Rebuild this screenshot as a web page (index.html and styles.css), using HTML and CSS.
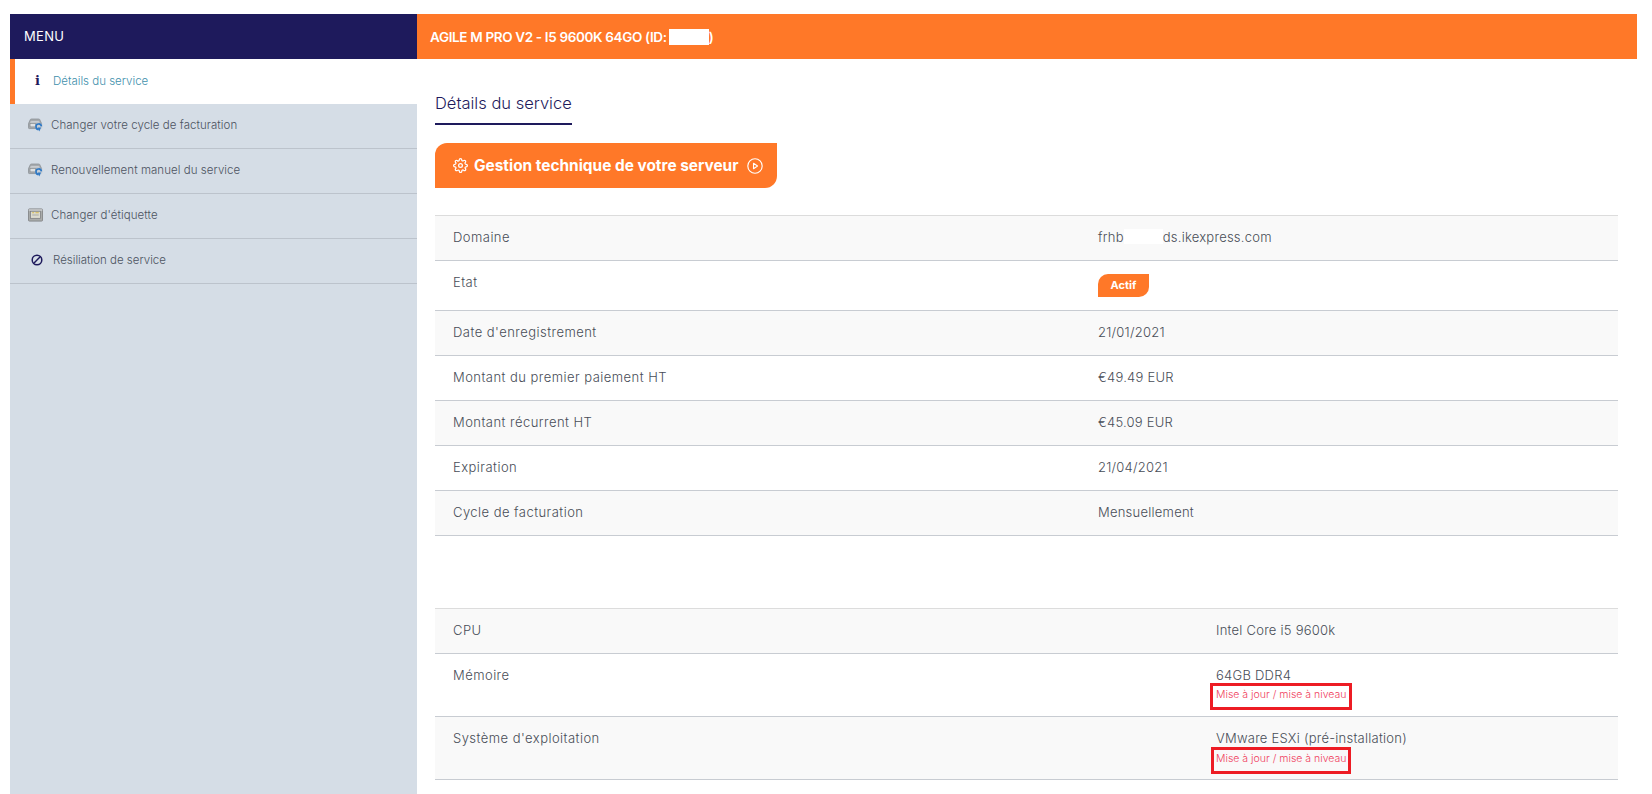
FILE: index.html
```html
<!DOCTYPE html>
<html lang="fr">
<head>
<meta charset="utf-8">
<title>Détails du service</title>
<link rel="stylesheet" href="styles.css">
</head>
<body>
<svg class="defs" width="0" height="0">
  <symbol id="drive" viewBox="0 0 16 14">
    <path d="M0.500 5.500 2.500 1.200Q2.700.6 3.500.6h8q.8 0 1 .6l2 4.300v4.500q0 .8-.8.8H1.300q-.8 0-.8-.8z" fill="#a6aaae" stroke="#8a8f94" stroke-width=".8"/>
    <path d="M2.200 4.500q0-1.700 1.700-1.700h7q1.500 0 1.700 1.700z" fill="#c9ccd0"/>
    <rect x="2.200" y="5.500" width="5.800" height="3.500" fill="#dfe1e3" stroke="#84888c" stroke-width=".6"/>
    <circle cx="11.700" cy="8.800" r="3.900" fill="#d5dde6" opacity=".7"/>
    <path d="M14.300 8.400A2.900 2.900 0 1 0 11.500 11.700" fill="none" stroke="#2f78c4" stroke-width="1.800"/>
    <path d="M10.400 9.700 14 9.700 12 13.800z" fill="#2f78c4"/>
  </symbol>
</svg>
<div class="page">
  <aside class="sidebar">
    <div class="menu-head">MENU</div>
    <a class="item active"><span class="glyph">i</span><span>Détails du service</span></a>
    <a class="item"><svg class="ico"><use href="#drive"/></svg><span>Changer votre cycle de facturation</span></a>
    <a class="item"><svg class="ico"><use href="#drive"/></svg><span>Renouvellement manuel du service</span></a>
    <a class="item"><svg class="ico" viewBox="0 0 16 14"><rect x="0.500" y="0.500" width="15" height="13" rx="1" fill="#a9abaa" stroke="#85888a"/><rect x="0.800" y="0.800" width="14.400" height="2" fill="#c3c6c8"/><rect x="2.800" y="3" width="10.400" height="7.500" fill="#dcdbcf" stroke="#74777a" stroke-width=".7"/><path d="M4.500 4.600h2M8 4.600h3.500" stroke="#d9bc4f" stroke-width="1.100"/><path d="M4.500 7h7" stroke="#9a9c9b" stroke-width=".8"/></svg><span>Changer d'étiquette</span></a>
    <a class="item slim"><svg class="ban" viewBox="0 0 12 12"><circle cx="6" cy="6" r="4.800" fill="none" stroke="#1e1a5c" stroke-width="1.500"/><path d="M2.800 9.200 9.200 2.800" stroke="#1e1a5c" stroke-width="1.500"/></svg><span>Résiliation de service</span></a>
  </aside>
  <main class="content">
    <header class="title-bar">AGILE M PRO V2 - I5 9600K 64GO (ID:<span class="mask"></span>)</header>
    <div class="body">
      <h2 class="tab-title">Détails du service</h2>
      <a class="cta"><svg class="cta-ico" viewBox="0 0 24 24" fill="none" stroke="#fff" stroke-width="2" stroke-linejoin="round"><circle cx="12" cy="12" r="3"/><path d="M19.400 15a1.650 1.650 0 0 0 .33 1.820l.06.06a2 2 0 0 1 0 2.830 2 2 0 0 1-2.830 0l-.06-.06a1.650 1.650 0 0 0-1.820-.33 1.650 1.650 0 0 0-1 1.510V21a2 2 0 0 1-2 2 2 2 0 0 1-2-2v-.09A1.650 1.650 0 0 0 9 19.400a1.650 1.650 0 0 0-1.820.33l-.06.06a2 2 0 0 1-2.830 0 2 2 0 0 1 0-2.830l.06-.06a1.650 1.650 0 0 0 .33-1.820 1.650 1.650 0 0 0-1.510-1H3a2 2 0 0 1-2-2 2 2 0 0 1 2-2h.09A1.650 1.650 0 0 0 4.600 9a1.650 1.650 0 0 0-.33-1.820l-.06-.06a2 2 0 0 1 0-2.830 2 2 0 0 1 2.830 0l.06.06a1.650 1.650 0 0 0 1.820.33H9a1.650 1.650 0 0 0 1-1.510V3a2 2 0 0 1 2-2 2 2 0 0 1 2 2v.09a1.650 1.650 0 0 0 1 1.510 1.650 1.650 0 0 0 1.820-.33l.06-.06a2 2 0 0 1 2.830 0 2 2 0 0 1 0 2.830l-.06.06a1.650 1.650 0 0 0-.33 1.820V9a1.650 1.650 0 0 0 1.510 1H21a2 2 0 0 1 2 2 2 2 0 0 1-2 2h-.09a1.650 1.650 0 0 0-1.510 1z"/></svg><span>Gestion technique de votre serveur</span><svg class="play" viewBox="0 0 24 24" fill="none" stroke="#fff" stroke-width="1.700" stroke-linejoin="round"><circle cx="12" cy="12" r="10.800"/><path d="M9.800 8l6 4-6 4z"/></svg></a>
      <section class="info-table first">
        <div class="row"><span class="k">Domaine</span><span class="v">frhb<span class="gap"></span>ds.ikexpress.com</span></div>
        <div class="row tall"><span class="k">Etat</span><span class="v"><span class="badge">Actif</span></span></div>
        <div class="row"><span class="k">Date d'enregistrement</span><span class="v">21/01/2021</span></div>
        <div class="row"><span class="k">Montant du premier paiement HT</span><span class="v">€49.49 EUR</span></div>
        <div class="row"><span class="k">Montant récurrent HT</span><span class="v">€45.09 EUR</span></div>
        <div class="row"><span class="k">Expiration</span><span class="v">21/04/2021</span></div>
        <div class="row"><span class="k">Cycle de facturation</span><span class="v">Mensuellement</span></div>
      </section>
      <section class="info-table second">
        <div class="row"><span class="k">CPU</span><span class="v">Intel Core i5 9600k</span></div>
        <div class="row up"><span class="k">Mémoire</span><span class="v">64GB DDR4<a class="upgrade">Mise à jour / mise à niveau</a></span></div>
        <div class="row up"><span class="k">Système d'exploitation</span><span class="v">VMware ESXi (pré-installation)<a class="upgrade narrow">Mise à jour / mise à niveau</a></span></div>
      </section>
    </div>
  </main>
</div>
</body>
</html>
```
FILE: styles.css
```css
* { box-sizing: border-box; }
html, body { margin: 0; height: 100%; overflow: hidden; background: #fff; }
body { font-family: Inter, "Liberation Sans", sans-serif; color: #484d57; padding-top: 14px; }
.defs { position: absolute; }
.page { display: flex; height: 780px; padding: 0 15px 0 10px; }

.sidebar { width: 407px; flex: none; background: #d5dde6; font-size: 11.5px; font-weight: 300; color: #4c535f; }
.menu-head { height: 45px; background: #1e1a5c; color: #fff; font-size: 13px; font-weight: 400; letter-spacing: .3px; padding: 0 0 2px 14px; display: flex; align-items: center; }
.item { height: 45px; display: flex; align-items: center; padding: 0 0 2px 18px; gap: 8px; letter-spacing: .05px; border-bottom: 1px solid #bcc3cc; }
.item.active { background: #fff; color: #3f90ac; border-left: 5px solid #ff7828; border-bottom: 0; padding-left: 20px; gap: 13px; letter-spacing: 0; }
.item.slim { padding-left: 21px; gap: 10px; letter-spacing: 0; }
.glyph { font-family: "DejaVu Serif", serif; font-weight: 700; color: #1e1a5c; font-size: 13px; }
.ico { width: 15px; height: 14px; flex: none; }
.ban { width: 12px; height: 12px; flex: none; }

.content { flex: 1; min-width: 0; }
.title-bar { height: 45px; background: #ff7828; color: #fff; font-weight: 600; font-size: 13.5px; display: flex; align-items: center; padding-left: 13px; letter-spacing: -.35px; }
.mask { width: 40px; height: 16px; background: #fff; display: inline-block; margin-left: 2px; }
.body { padding: 0 19px 0 18px; }
.tab-title { width: 137px; height: 32px; margin: 34px 0 0; font-weight: 300; font-size: 16.5px; color: #1e1a5c; border-bottom: 2px solid #1e1a5c; }
.cta { display: flex; width: 342px; height: 45px; margin-top: 18px; background: #ff7828; color: #fff; font-weight: 700; font-size: 15.4px; align-items: center; padding-left: 18px; gap: 6px; border-radius: 12px 0 12px 0; }
.cta-ico { width: 15px; height: 15px; flex: none; }
.play { width: 16px; height: 16px; flex: none; margin-left: 3px; }

.info-table { border-top: 1px solid #dcdcdc; font-size: 13px; font-weight: 300; }
.first { margin-top: 27px; }
.second { margin-top: 72px; }
.row { display: flex; height: 45px; padding: 13px 18px 0; border-bottom: 1px solid #c8ccd2; line-height: 16px; }
.row:nth-child(odd) { background: #f9f9f9; }
.row.tall { height: 50px; }
.k { flex: 0 0 645px; letter-spacing: .46px; }
.v { letter-spacing: .24px; }
.second .k { flex-basis: 763px; }
.gap { display: inline-block; width: 39px; height: 15px; background: #fff; vertical-align: -2px; }
.badge { display: inline-block; width: 51px; height: 23px; background: #ff7828; color: #fff; font-size: 11px; font-weight: 700; letter-spacing: 0; text-align: center; line-height: 22px; border-radius: 10px 0 10px 0; }
.row.up { height: 63px; }
.upgrade { display: block; width: 142px; height: 27px; margin: 0 0 0 -6px; padding: 2px 0 0 3px; font-size: 10.5px; line-height: 14px; letter-spacing: 0; color: #f0405c; border: 3px solid #ed1c24; }
.upgrade.narrow { width: 140px; margin: 1px 0 0 -5px; padding-left: 2px; }
```
